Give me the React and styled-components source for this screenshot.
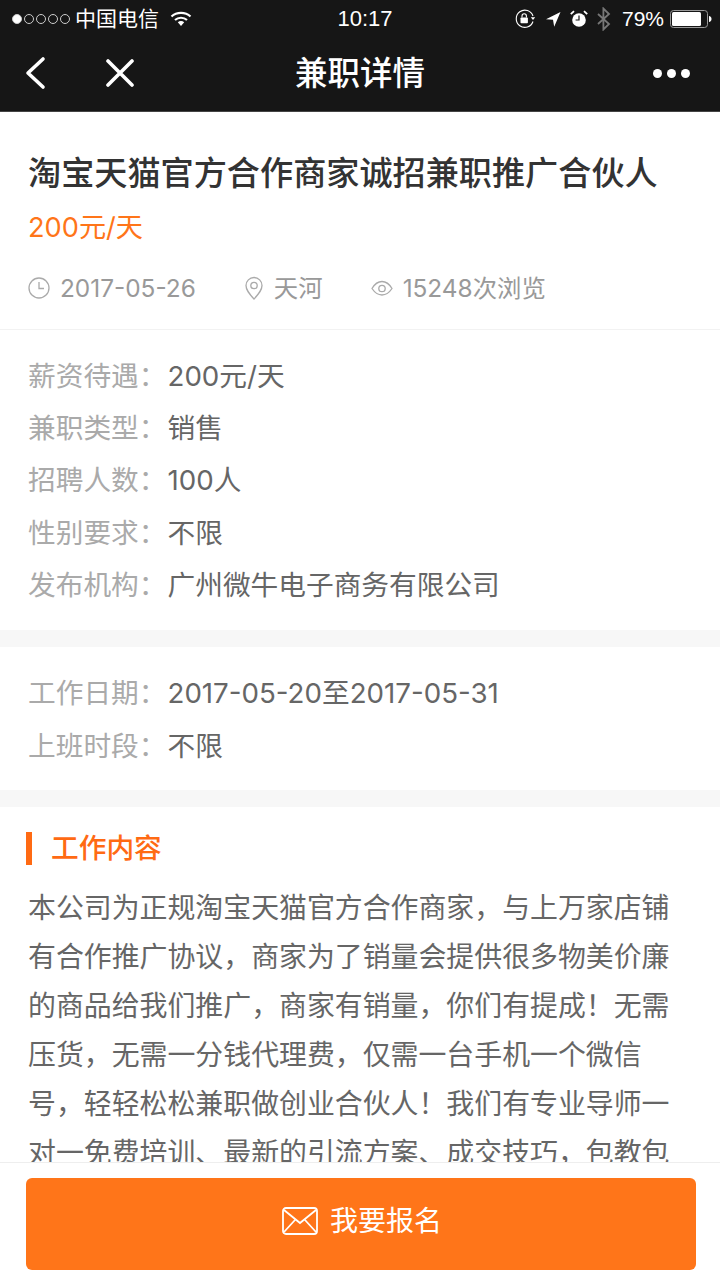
import React from "react";
import styled, { createGlobalStyle } from "styled-components";

const GlobalStyle = createGlobalStyle`
    html, body {
        margin: 0;
        padding: 0;
        height: 100%;
        overflow: hidden;
        background: #fff;
    }

    * {
        box-sizing: border-box;
    }

    body {
        font-family: "Inter", "Noto Sans CJK SC", sans-serif;
    }
`;

const basicInfo = [
    ["薪资待遇：", "200元/天"],
    ["兼职类型：", "销售"],
    ["招聘人数：", "100人"],
    ["性别要求：", "不限"],
    ["发布机构：", "广州微牛电子商务有限公司"],
];

const timeInfo = [
    ["工作日期：", "2017-05-20至2017-05-31"],
    ["上班时段：", "不限"],
];

const jobText =
    "本公司为正规淘宝天猫官方合作商家，与上万家店铺有合作推广协议，商家为了销量会提供很多物美价廉的商品给我们推广，商家有销量，你们有提成！无需压货，无需一分钱代理费，仅需一台手机一个微信号，轻轻松松兼职做创业合伙人！我们有专业导师一对一免费培训、最新的引流方案、成交技巧，包教包";

const StatusIcons = () => (
    <StatusRight>
        <svg width="22" height="20" viewBox="0 0 22 20" fill="none">
            <path d="M19 12.5A8.6 8.6 0 1 1 19 7" stroke="#fff" strokeWidth="1.1" />
            <path d="M16.8 8.2h4.4L19 11z" fill="#fff" />
            <rect x="6.5" y="8.5" width="7.4" height="5.8" rx="0.8" fill="#fff" />
            <path d="M8 8.5V7a2.2 2.2 0 0 1 4.4 0v1.5" stroke="#fff" strokeWidth="1.1" />
        </svg>
        <svg width="16" height="16" viewBox="0 0 16 16">
            <path d="M15.5 1 1 8.2l7 .6 1.2 7z" fill="#fff" />
        </svg>
        <svg width="18" height="18" viewBox="0 0 18 18" fill="none">
            <circle cx="9" cy="10" r="6.8" fill="#fff" />
            <path d="M9 5.6V10H5.6" stroke="#161616" strokeWidth="1.2" />
            <path d="M.8 4.2 4 1.2M17.2 4.2 14 1.2" stroke="#fff" strokeWidth="1.8" />
        </svg>
        <svg width="14" height="24" viewBox="0 0 14 24" fill="none">
            <path d="M1 7l11 10-5.6 5.5V1.500L12 7 1 17" stroke="#777" strokeWidth="1.8" />
        </svg>
        <Battery>79%</Battery>
        <svg width="42" height="18" viewBox="0 0 42 18" fill="none">
            <rect x="0.5" y="0.5" width="37" height="17" rx="3" stroke="#999" />
            <rect x="2" y="2" width="29" height="14" rx="1.500" fill="#fff" />
            <path d="M39 6c1.500.2 2.500 1.200 2.500 3s-1 2.800-2.500 3z" fill="#fff" />
        </svg>
    </StatusRight>
);

const InfoRows = ({ rows }) =>
    rows.map(([label, value]) => (
        <InfoRow key={label}>
            <InfoLabel>{label}</InfoLabel>
            <InfoValue>{value}</InfoValue>
        </InfoRow>
    ));

export default function App() {
    return (
        <Page>
            <GlobalStyle />

            <Header>
                <StatusBar>
                    <Carrier>
                        <Signal>
                            {[true, false, false, false, false].map((on, i) => (
                                <SignalDot key={i} $on={on} />
                            ))}
                        </Signal>
                        <CarrierName>中国电信</CarrierName>
                        <svg width="22" height="16" viewBox="0 0 22 16" fill="none">
                            <path d="M1.500 5.500c5.200-4.800 13.800-4.800 19 0" stroke="#fff" strokeWidth="2.200" />
                            <path d="M5 9c3.300-3 8.700-3 12 0" stroke="#fff" strokeWidth="2.200" />
                            <path d="M7.800 11.200c1.800-1.500 4.600-1.500 6.400 0L11 15z" fill="#fff" />
                        </svg>
                    </Carrier>
                    <Clock>10:17</Clock>
                    <StatusIcons />
                </StatusBar>

                <NavBar>
                    <NavLeft>
                        <svg width="22" height="34" viewBox="0 0 22 34" fill="none">
                            <path d="M19 3 4 17l15 14" stroke="#fff" strokeWidth="3.600" strokeLinecap="round" strokeLinejoin="round" />
                        </svg>
                        <svg width="28" height="28" viewBox="0 0 28 28" fill="none">
                            <path d="M2 2l24 24M26 2 2 26" stroke="#fff" strokeWidth="3.600" strokeLinecap="round" />
                        </svg>
                    </NavLeft>
                    <NavTitle>兼职详情</NavTitle>
                    <NavMore>
                        <i />
                        <i />
                        <i />
                    </NavMore>
                </NavBar>
            </Header>

            <Main>
                <TitleBlock>
                    <JobTitle>淘宝天猫官方合作商家诚招兼职推广合伙人</JobTitle>
                    <Salary>200元/天</Salary>
                    <Meta>
                        <MetaItem>
                            <svg width="22" height="22" viewBox="0 0 22 22" fill="none">
                                <circle cx="11" cy="11" r="10" stroke="#aaa" strokeWidth="1.300" />
                                <path d="M11 5v6.500h5" stroke="#aaa" strokeWidth="1.300" />
                            </svg>
                            2017-05-26
                        </MetaItem>
                        <MetaItem>
                            <svg width="20" height="24" viewBox="0 0 20 24" fill="none">
                                <path d="M10 23C5 17.500 2 14 2 9.500a8 8 0 0 1 16 0C18 14 15 17.500 10 23z" stroke="#aaa" strokeWidth="1.300" />
                                <circle cx="10" cy="9.500" r="3.200" stroke="#aaa" strokeWidth="1.300" />
                            </svg>
                            天河
                        </MetaItem>
                        <MetaItem>
                            <svg width="22" height="16" viewBox="0 0 22 16" fill="none">
                                <path d="M1 8.500C4 3.500 7.500 1.500 11 1.500s7 2 10 7c-3 4.500-6.500 6.500-10 6.500S4 13 1 8.500z" stroke="#aaa" strokeWidth="1.300" />
                                <circle cx="11" cy="8.500" r="3.200" stroke="#aaa" strokeWidth="1.300" />
                            </svg>
                            15248次浏览
                        </MetaItem>
                    </Meta>
                </TitleBlock>

                <InfoBlock $top={17.5} $bottom={20.5}>
                    <InfoRows rows={basicInfo} />
                </InfoBlock>
                <Divider />
                <InfoBlock $top={18} $bottom={20}>
                    <InfoRows rows={timeInfo} />
                </InfoBlock>
                <Divider />

                <ContentBlock>
                    <SectionTitle>工作内容</SectionTitle>
                    <Paragraph>{jobText}</Paragraph>
                </ContentBlock>
            </Main>

            <Footer>
                <ApplyButton>
                    <svg width="36" height="28" viewBox="0 0 36 28" fill="none">
                        <rect x="1" y="1" width="34" height="26" rx="3" stroke="#fff" strokeWidth="1.800" />
                        <path d="M2 3l16 13L34 3M2 25l11-12M34 25 23 13" stroke="#fff" strokeWidth="1.800" />
                    </svg>
                    <ApplyText>我要报名</ApplyText>
                </ApplyButton>
            </Footer>
        </Page>
    );
}

const Page = styled.div`
    width: 720px;
    height: 1280px;
    display: flex;
    flex-direction: column;
    overflow: hidden;
    background: #fff;
`;

const Header = styled.header`
    flex: none;
    height: 112px;
    background: #161616;
    border-bottom: 1px solid #444;
    color: #fff;
`;

const StatusBar = styled.div`
    height: 37px;
    padding: 0 8px 0 12px;
    display: grid;
    grid-template-columns: 1fr auto 1fr;
    align-items: center;
    font-family: "Liberation Sans", "Noto Sans CJK SC", sans-serif;
    font-size: 21px;
`;

const Carrier = styled.div`
    display: flex;
    align-items: center;
    gap: 5px;

    svg {
        margin-left: 6px;
    }
`;

const CarrierName = styled.span`
    margin-top: -3px;
`;

const Signal = styled.div`
    display: flex;
    gap: 2px;
`;

const SignalDot = styled.span`
    width: 10px;
    height: 10px;
    border-radius: 50%;
    border: 1px solid #ccc;
    background: ${(p) => (p.$on ? "#fff" : "transparent")};
`;

const Clock = styled.div`
    margin-left: 6px;
    font-size: 22px;
`;

const StatusRight = styled.div`
    display: flex;
    justify-content: flex-end;
    align-items: center;
    gap: 9px;
`;

const Battery = styled.span`
    margin-left: 2px;
    margin-right: -3px;
`;

const NavBar = styled.nav`
    height: 72px;
    padding: 0 30px;
    display: grid;
    grid-template-columns: 1fr 130px 1fr;
    align-items: center;
`;

const NavLeft = styled.div`
    display: flex;
    align-items: center;
    gap: 60px;
    margin-left: -6px;
`;

const NavTitle = styled.h1`
    margin: 0;
    padding-bottom: 6px;
    font-size: 32.5px;
    font-weight: 500;
    white-space: nowrap;
`;

const NavMore = styled.div`
    display: flex;
    justify-content: flex-end;
    gap: 5px;

    i {
        width: 9px;
        height: 9px;
        border-radius: 50%;
        background: #fff;
    }
`;

const Main = styled.main`
    flex: 1;
    min-height: 0;
    overflow: hidden;
`;

const TitleBlock = styled.section`
    height: 218px;
    padding: 38px 28px 0;
    border-bottom: 1px solid #f2f2f2;
`;

const JobTitle = styled.h2`
    margin: 0;
    font-size: 33.15px;
    line-height: 46px;
    font-weight: 500;
    color: #333;
    white-space: nowrap;
`;

const Salary = styled.div`
    margin-top: 12px;
    font-size: 27.2px;
    line-height: 40px;
    color: #ff7519;
`;

const Meta = styled.div`
    margin-top: 20px;
    display: flex;
    gap: 48px;
    font-size: 24.4px;
    line-height: 40px;
    color: #999;
`;

const MetaItem = styled.div`
    display: flex;
    align-items: center;
    gap: 10px;
`;

const InfoBlock = styled.section`
    padding: ${(p) => p.$top}px 28px ${(p) => p.$bottom}px;
`;

const InfoRow = styled.div`
    display: flex;
    height: 52.4px;
    align-items: center;
    font-size: 27.7px;
`;

const InfoLabel = styled.span`
    width: 139.5px;
    color: #aaa;
`;

const InfoValue = styled.span`
    color: #666;
`;

const Divider = styled.div`
    height: 17px;
    background: #f7f7f7;
`;

const ContentBlock = styled.section`
    padding: 25px 28px 0;
`;

const SectionTitle = styled.h3`
    margin: 0 0 19px -2px;
    padding-left: 19px;
    border-left: 6px solid #ff6a13;
    font-size: 27.7px;
    line-height: 33px;
    font-weight: 500;
    color: #ff6a13;
`;

const Paragraph = styled.p`
    margin: 0;
    font-size: 27.9px;
    line-height: 49px;
    color: #666;
`;

const Footer = styled.footer`
    flex: none;
    height: 118px;
    padding: 15px 24px 0 26px;
    background: #fff;
    border-top: 1px solid #eee;
`;

const ApplyButton = styled.button`
    width: 100%;
    height: 92px;
    padding: 0 0 7px 2px;
    border: none;
    border-radius: 6px;
    background: #ff7519;
    color: #fff;
    font-family: inherit;
    font-size: 28px;
    display: flex;
    align-items: center;
    justify-content: center;
    gap: 12px;
`;

const ApplyText = styled.span`
    padding-bottom: 4px;
`;
